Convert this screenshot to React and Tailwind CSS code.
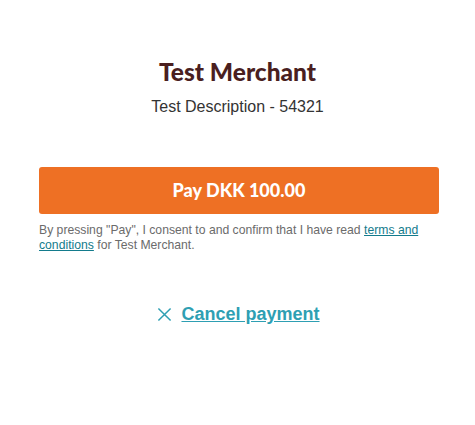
export default function App() {
  return (
    <div className="w-[475px] h-[425px] bg-white" style={{ fontFamily: '"Liberation Sans", Arial, sans-serif' }}>
      <div className="pt-[55px] flex flex-col items-center">
        <h1 className="text-[24.5px] leading-[34px] font-bold text-[#4a1f1f]" style={{ fontFamily: 'Lato, "Noto Sans", sans-serif', fontWeight: 900 }}>
          Test Merchant
        </h1>
        <p className="mt-[8px] text-[16px] leading-[20px] text-[#333333]">Test Description - 54321</p>
      </div>
      <div className="ml-[39px] w-[400px] mt-[50px]">
        <button className="w-full h-[47px] rounded-[3px] bg-[#ee7024] text-white text-[18px] font-bold" style={{ fontFamily: 'Lato, "Noto Sans", sans-serif', fontWeight: 900 }}>
          Pay DKK 100.00
        </button>
        <p className="mt-[9px] text-[12.2px] leading-[15px] text-[#6b6b6b]">
          By pressing "Pay", I consent to and confirm that I have read{" "}
          <a href="#" className="underline text-[#137b8c]">terms and conditions</a> for Test Merchant.
        </p>
      </div>
      <div className="mt-[50px] flex justify-center items-center gap-[9px] text-[#2e9fb3]">
        <svg width="15" height="15" viewBox="0 0 16 16" fill="none" stroke="currentColor" strokeWidth="1.6" className="ml-[2px]">
          <path d="M1.5 1.5 L14.5 14.5 M14.5 1.5 L1.5 14.5" />
        </svg>
        <a href="#" className="text-[18px] font-bold underline leading-[22px]">Cancel payment</a>
      </div>
    </div>
  );
}
